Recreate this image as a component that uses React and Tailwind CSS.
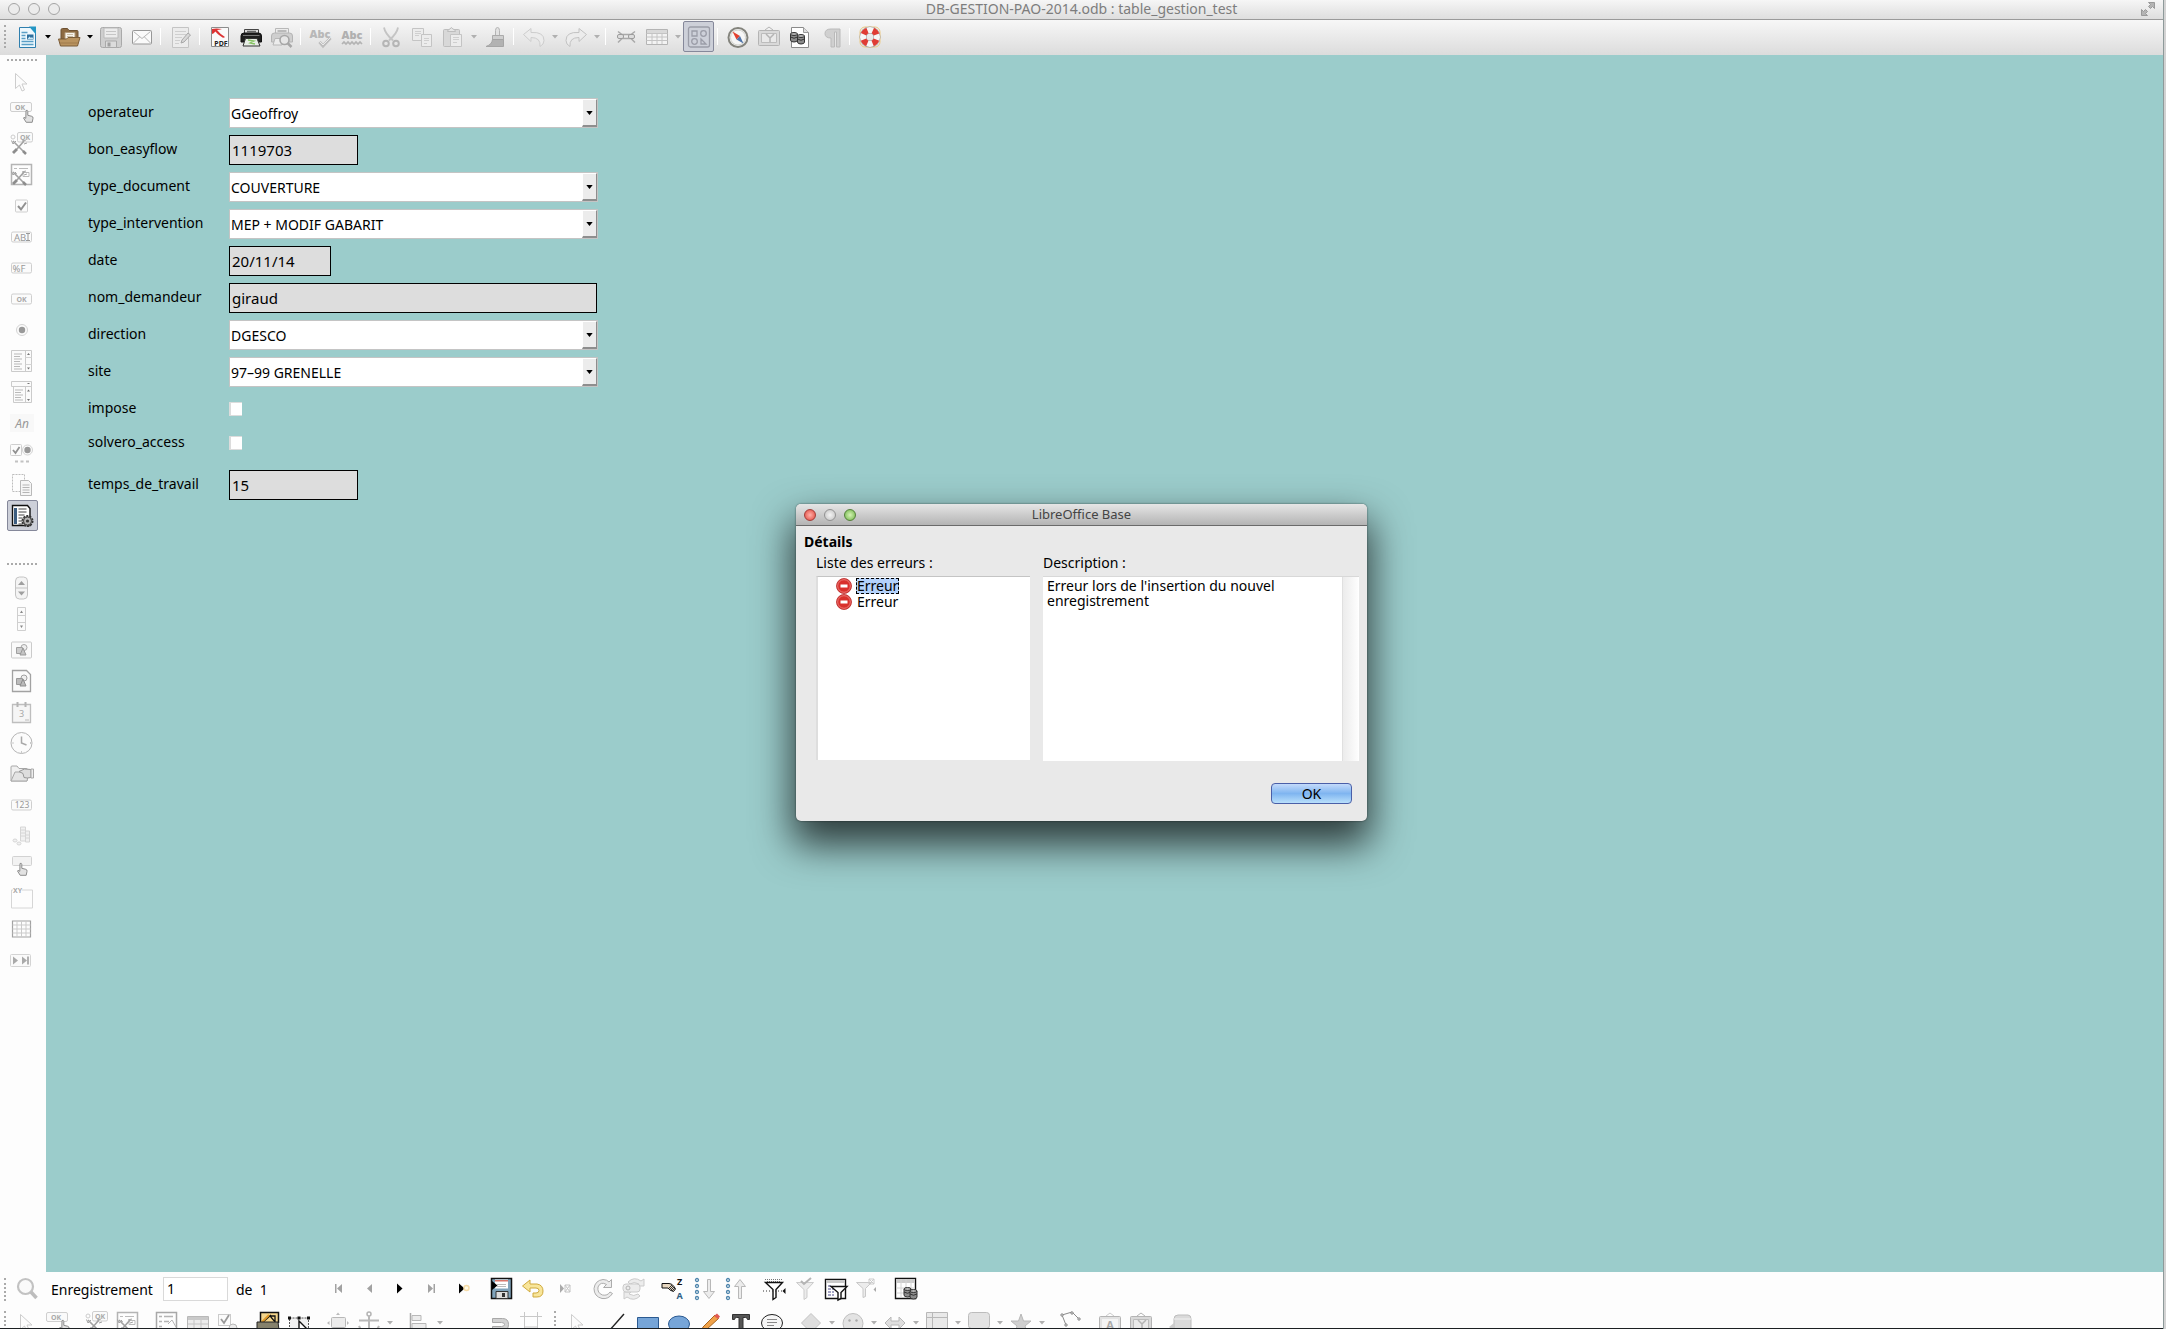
import React, { useState } from 'react';

// petit texte dessiné dans une icône (OK, PDF, Abc...)
const T = ({ x = 12, y = 16, s = 8, c = '#999', b = 400, i, children }) => (
  <text x={x} y={y} fontSize={s} fill={c} fontWeight={b} fontStyle={i ? 'italic' : 'normal'} textAnchor="middle" fontFamily="Noto Sans, sans-serif">{children}</text>
);

const g = { fill: 'none', stroke: '#b4b4b4', strokeWidth: 1 };
const f = { fill: '#ececec', stroke: '#b8b8b8', strokeWidth: 1 };
const k = { fill: '#fff', stroke: '#111', strokeWidth: 1.4 };

const main = (x, y) => (
  <path transform={`translate(${x} ${y})`} d="M3 0.500q1.500-.8 1.800.8v4l4 1q1.500.4 1.200 2l-.8 4h-6L0.500 8q0-1.500 2.300.3z" fill="#e2e2e2" stroke="#8e8e8e" />
);
const outils = (
  <>
    <path d="M3 9 15 21M14 9 7 17" stroke="#a2a2a2" strokeWidth="1.600" />
    <path d="M1.500 8.500 3 12l3-3M12 9l4-1M14 12l3-1" stroke="#a2a2a2" fill="none" />
    <path d="m6 16-4 4 2 2 4-4z" fill="#8d8d8d" />
    <path d="m13 19 3 3" stroke="#8d8d8d" strokeWidth="2.500" />
  </>
);
const entonnoir = (p) => <path d="M3.500 5.500h17l-6.500 7v8l-3 2v-10z" {...p} />;
const baril = (x, y) => (
  <g fill="#8c8c8c" stroke="#333">
    <path d={`M${x} ${y}v6q0 2 3.500 2t3.500-2v-6`} />
    <ellipse cx={x + 3.5} cy={y} rx="3.500" ry="1.500" fill="#b5b5b5" />
    <path d={`M${x} ${y + 3}q3.500 2.500 7 0`} fill="none" />
  </g>
);

const ICONS = {
  nouveau: (
    <>
      <path d="M4.500 2.500h11l5 5v15h-16z" fill="#eef8fd" stroke="#2f7fae" />
      <path d="M14 1.500h7v8z" fill="#2496c4" />
      <path d="M6.500 7.500h6M6.500 10.500h4M6.500 13.500h4M6.500 16.500h12M6.500 19.500h12" stroke="#5a9fc6" strokeWidth="1.400" />
      <path d="M12 9.500h6.500v5H12z" fill="#2d6f9d" />
      <path d="m12.500 14 2-2.500 1.500 1.500 1-1 1.500 2z" fill="#c9e8f5" />
    </>
  ),
  ouvrir: (
    <>
      <path d="M4 14V5q0-1.500 1.500-1.500h5L12 5.500h8q1 0 1 1V14z" fill="#8d6a42" stroke="#6e5233" />
      <path d="M8 7.500h10V15H8z" fill="#f7f3ec" stroke="#b09a7a" />
      <path d="M10 9.500h6M10 11.500h6" stroke="#c9bda6" />
      <path d="M1.500 14h8l1.500-1.500h12L20.500 21h-17z" fill="#b9935f" stroke="#7b5c38" />
      <path d="M3 18h18.500" stroke="#9f7b4c" />
    </>
  ),
  enregistrer: (
    <>
      <rect x="1.500" y="2.500" width="21" height="20" rx="2" fill="#cfcfcf" stroke="#a9a9a9" />
      <path d="M5 3h14v10H5z" fill="#ececec" stroke="#bbb" />
      <path d="M7 6.500h10M7 9.500h10" stroke="#c6c6c6" />
      <path d="M6.500 16h11v6.500h-11z" fill="#dcdcdc" stroke="#aaa" />
      <path d="M8.500 17.500h3v4h-3z" fill="#a0a0a0" />
    </>
  ),
  mail: (
    <>
      <rect x="2.500" y="5.500" width="19" height="13.500" rx="1" fill="#fafafa" stroke="#979797" />
      <path d="m3.500 6.500 8.500 7 8.500-7M3.500 18l6-6M20.500 18l-6-6" fill="none" stroke="#b5b5b5" />
    </>
  ),
  editer: (
    <>
      <path d="M3.500 2.500h16v20h-16z" {...f} stroke="#c4c4c4" />
      <path d="M6 6.500h11M6 9.500h11M6 12.500h7M6 15.500h5M6 18.500h4" stroke="#cfcfcf" />
      <path d="m12 18 1-3 6-7 2.500 2-6.500 7z" fill="#d8d8d8" stroke="#a8a8a8" />
    </>
  ),
  pdf: (
    <>
      <path d="M3.500 2.500h17v19h-17z" fill="#fafafa" stroke="#8c8c8c" />
      <path d="M4 4q4-1 10 0-3 1-5 1 3 4 8 7-1 1-2.500.5Q9 9 7.500 6.500 5 9 4 9z" fill="#dd3333" />
      <T x={13} y={20.5} s={7} c="#222" b={700}>PDF</T>
    </>
  ),
  imprimer: (
    <>
      <path d="M5.500 9V4.500h14V9z" fill="#ddd" stroke="#444" />
      <path d="M8 6.500h9" stroke="#666" strokeWidth="1.500" />
      <path d="M2 11q0-3 3-3h14.500q3 0 3 3v6H2z" fill="#1f1f1f" stroke="#111" />
      <path d="M4 10.500h16.500" stroke="#777" />
      <path d="M6.500 13.500h11.500l3 7.500H4z" fill="#e8eee6" stroke="#333" />
      <path d="m9 15 6 1-4 2 5 1" stroke="#87c364" fill="none" strokeWidth="1.300" />
    </>
  ),
  apercu: (
    <>
      <path d="M5.500 9V3.500h13V9z" {...f} />
      <path d="M7.500 6h9" stroke="#aaa" strokeWidth="1.500" />
      <path d="M1.500 11q0-3 3-3h15q3 0 3 3v6h-21z" fill="#cfcfcf" stroke="#b4b4b4" />
      <path d="M5 13.500h7V20H3z" {...f} />
      <circle cx="14.500" cy="15" r="4.500" fill="#e6e6e6" stroke="#a6a6a6" strokeWidth="1.600" />
      <path d="m17.500 18 4 4" stroke="#a6a6a6" strokeWidth="2.500" />
    </>
  ),
  ortho: (
    <>
      <T x={11} y={12.5} s={11} c="#b8b8b8" b={900}>Abc</T>
      <path d="m10.500 17 3.500 4 7.500-8" fill="none" stroke="#bdbdbd" strokeWidth="3" />
      <path d="m11 17 3 3 7-7" fill="none" stroke="#e9e9e9" />
    </>
  ),
  orthoAuto: (
    <>
      <T x={12} y={14} s={11} c="#b0b0b0" b={900}>Abc</T>
      <path d="m2 19 2-2 2 2 2-2 2 2 2-2 2 2 2-2 2 2 2-2 2 2" fill="none" stroke="#b3b3b3" strokeWidth="1.600" />
    </>
  ),
  couper: (
    <>
      <path d="M5 2.500q1 6 9 13M19 2.500q-1 6-9 13" fill="none" stroke="#c4c4c4" strokeWidth="1.800" />
      <circle cx="7" cy="18.500" r="2.800" fill="none" stroke="#b5b5b5" strokeWidth="2" />
      <circle cx="17" cy="18.500" r="2.800" fill="none" stroke="#b5b5b5" strokeWidth="2" />
    </>
  ),
  copier: (
    <>
      <path d="M2.500 3.500h11v12h-11z" {...f} stroke="#c4c4c4" />
      <path d="M5 6.500h6M5 8.500h6M5 10.500h4" stroke="#cfcfcf" />
      <path d="M11.500 9.500h10v12h-10z" {...f} stroke="#c4c4c4" />
      <path d="M14 13.500h5M14 15.500h5M14 18.500h3" stroke="#cfcfcf" />
    </>
  ),
  coller: (
    <>
      <rect x="2.500" y="4.500" width="16" height="17" rx="1" fill="#d8d8d8" stroke="#bdbdbd" />
      <path d="M6.500 6.500q0-2 2.500-2.500 1-3 3 0 2.500.5 2.500 2.500z" fill="#e6e6e6" stroke="#bdbdbd" />
      <path d="M9.500 9.500h11v12h-11z" {...f} stroke="#c4c4c4" />
      <path d="M12 12.500h6M12 14.500h6M12 17.500h4" stroke="#cfcfcf" />
    </>
  ),
  pinceau: (
    <>
      <path d="M14.500 2.500q2 0 2 3v5h-4v-5q0-3 2-3z" fill="#e2e2e2" stroke="#b4b4b4" />
      <path d="M9.500 10.500h11v4h-11z" fill="#cfcfcf" stroke="#ababab" />
      <path d="M9.500 14.500h11v7H3q6-2 6.500-7z" fill="#b2b2b2" stroke="#a5a5a5" />
    </>
  ),
  annuler: <path d="M1.500 9.500 9 3.500v4q13-1 13 8 0 4-4 6 1-9-9-9v4z" {...f} stroke="#cdcdcd" />,
  retablir: <path d="M22.500 9.500 15 3.500v4q-13-1-13 8 0 4 4 6-1-9 9-9v4z" {...f} stroke="#c2c2c2" />,
  lien: (
    <>
      <path d="m4 6.500 4 3h9l4-3M4 17.500l4-4h9l4 4" fill="none" stroke="#a9a9a9" strokeWidth="1.500" />
      <rect x="3.500" y="9.500" width="6" height="4" rx="1.500" fill="#ddd" stroke="#9c9c9c" />
      <rect x="14.500" y="9.500" width="6" height="4" rx="1.500" fill="#ddd" stroke="#9c9c9c" />
    </>
  ),
  tableau: (
    <>
      <path d="M1.500 4.500h21v15h-21z" fill="#f3f3f3" stroke="#b4b4b4" />
      <path d="M2 5h20v3H2z" fill="#d9d9d9" />
      <path d="M1.500 8.500h21M1.500 12h21M1.500 15.500h21M7 8v11M12 8v11M17 8v11" stroke="#c4c4c4" />
    </>
  ),
  formes: (
    <g fill="none" stroke="#9b9da8" strokeWidth="1.300">
      <rect x="1.500" y="2" width="21" height="20" rx="2" />
      <path d="M5 6h5v5H5zM14 14l5 5h-5z" />
      <circle cx="16.500" cy="8.500" r="2.800" />
      <circle cx="7.500" cy="16.500" r="2.800" />
    </g>
  ),
  boussole: (
    <>
      <circle cx="12" cy="12.500" r="9.500" fill="#f6f6f6" stroke="#83837c" strokeWidth="2" />
      <circle cx="12" cy="12.500" r="7.500" fill="none" stroke="#d2d2cc" />
      <path d="m6.500 6.500 7.500 4.500-3.500 3.500z" fill="#e3402f" />
      <path d="m17.500 18.500-7-4 3.500-3.500z" fill="#4f74a8" />
    </>
  ),
  galerie: (
    <>
      <path d="m8 5 4-3 4 3" {...g} />
      <rect x="1.500" y="5.500" width="21" height="15" rx="1" fill="#d9d9d9" stroke="#b4b4b4" />
      <path d="M4.500 8.500h15v9h-15z" fill="#e9e9e9" stroke="#bcbcbc" />
      <path d="m9 9 4 4 4-4M13 12v5" stroke="#b4b4b4" strokeWidth="1.500" fill="none" />
    </>
  ),
  source: (
    <>
      <path d="M3.500 2.500h12l5 5v15h-17z" fill="#fff" stroke="#8a8a8a" />
      <path d="M15.500 2.500v5h5" fill="#ddd" stroke="#999" />
      {baril(2.5, 9)}
      {baril(9.5, 11)}
    </>
  ),
  para: <path d="M21 4v18h-3.500V7h-2v15H12V13q-6 0-6-4.500T12 4z" fill="#d0d0d0" stroke="#bababa" />,
  aide: (
    <>
      <rect x="2" y="2" width="20" height="20" rx="5" fill="none" stroke="#edc982" />
      <circle cx="12" cy="12" r="7" fill="none" stroke="#9a9a9a" strokeWidth="7" />
      <circle cx="12" cy="12" r="7" fill="none" stroke="#f6f6f6" strokeWidth="6" />
      <circle cx="12" cy="12" r="7" fill="none" stroke="#e03c34" strokeWidth="6" strokeDasharray="5.500 5.500" strokeDashoffset="-2.700" />
    </>
  ),
  curseur: <path d="M5.500 3.500v15l4-3.500 2.500 6 2.500-1-2.500-6h5z" fill="#fcfcfc" stroke="#cdcdcd" />,
  okMain: (
    <>
      <rect x="0.500" y="1.500" width="21" height="9" rx="1.500" fill="#fafafa" stroke="#cfcfcf" />
      <T x={10} y={9} s={7} c="#aaa" b={700}>OK</T>
      {main(13, 9)}
    </>
  ),
  controle: (
    <>
      <circle cx="3" cy="5" r="2" {...g} stroke="#ccc" />
      <rect x="7.500" y="0.500" width="15" height="9.500" rx="1.500" fill="#fafafa" stroke="#cfcfcf" />
      <T x={15} y={8} s={7} c="#aaa" b={700}>OK</T>
      {outils}
    </>
  ),
  formulaire: (
    <>
      <path d="M1.500 1.500h20v20h-20z" fill="#fdfdfd" stroke="#b4b4b4" strokeWidth="1.500" />
      <path d="M4 5.500h3M9 5.500h9M4 10.500h3M13 9.500h6v4h-6z" fill="none" stroke="#bbb" />
      {outils}
    </>
  ),
  coche: (
    <>
      <rect x="5.500" y="6" width="12" height="12" rx="1" fill="#fbfbfb" stroke="#cfcfcf" />
      <path d="m8 12 3 3.500 5-7" fill="none" stroke="#909090" strokeWidth="2" />
    </>
  ),
  champTexte: (
    <>
      <rect x="1.500" y="7" width="20" height="10" rx="1.500" fill="#fbfbfb" stroke="#cfcfcf" />
      <T x={10} y={15.5} s={9.5}>AB</T>
      <path d="M16 8.500h4M18 8.500v7M16 15.500h4" stroke="#999" />
    </>
  ),
  format: (
    <>
      <rect x="1.500" y="7" width="20" height="10" rx="1.500" fill="#fbfbfb" stroke="#cfcfcf" />
      <T x={9} y={15.5} s={9.5}>%F</T>
    </>
  ),
  bouton: (
    <>
      <rect x="1.500" y="7" width="20" height="10" rx="1.500" fill="#fbfbfb" stroke="#cfcfcf" />
      <T x={11.5} y={14.5} s={7} c="#aaa" b={700}>OK</T>
    </>
  ),
  radio: (
    <>
      <circle cx="12" cy="12" r="5.500" fill="#fbfbfb" stroke="#d4d4d4" />
      <circle cx="12" cy="12" r="3.200" fill="#999" />
    </>
  ),
  liste: (
    <>
      <path d="M1.500 1.500h20v21h-20zM15.500 1.500v21" fill="#fbfbfb" stroke="#cbcbcb" />
      <path d="M4 5h8M4 7.500h6M4 10h8M4 12.500h6M4 15h8M4 17.500h6M4 20h8" stroke="#b9b9b9" />
      <path d="m17 6 1.500-2L20 6zM17 18.500l1.500 2 1.500-2z" fill="#777" />
      <path d="M15.500 8.500h6M15.500 15.500h6" stroke="#d4d4d4" />
    </>
  ),
  combo: (
    <>
      <path d="M1.500 1.500h20v5h-20zM3.500 6.500h18v16h-18zM15.500 6.500v16" fill="#fbfbfb" stroke="#cbcbcb" />
      <path d="M5 10h8M5 12.500h6M5 15h8M5 17.500h6M5 20h8" stroke="#b9b9b9" />
      <path d="m17 11.500 1.500-2 1.500 2zM17 19l1.500 2 1.500-2zM17.500 3h2v1h-2z" fill="#777" />
    </>
  ),
  etiquette: (
    <>
      <path d="M0 3h24v18H0z" fill="#f8f8f8" />
      <T x={12} y={16.5} s={12} i>An</T>
    </>
  ),
  plus: (
    <>
      <rect x="0.500" y="2.500" width="11" height="11" rx="1" fill="#fbfbfb" stroke="#cfcfcf" />
      <path d="m3 8 2.500 3 4-6" fill="none" stroke="#909090" strokeWidth="1.800" />
      <circle cx="17.500" cy="8" r="5" fill="#fbfbfb" stroke="#d4d4d4" />
      <circle cx="17.500" cy="8" r="3.200" fill="#999" />
      <path d="M5 19.500h3M10.500 19.500h3M16 19.500h3" stroke="#c2c2c2" strokeWidth="2" />
    </>
  ),
  conception: (
    <>
      <path d="M2.500 1.500h12v17h-12z" fill="none" stroke="#bdbdbd" strokeDasharray="2 1" />
      <path d="M10.500 7.500h8l3 3v12h-11z" fill="#f6f6f6" stroke="#b9b9b9" />
      <path d="M12.500 12h7M12.500 14.500h7M12.500 17h7M12.500 19.500h7" stroke="#b5b5b5" />
    </>
  ),
  autopilote: (
    <>
      <path d="M2.500 1.500h15l2.500 3v17h-17.500z" fill="#fff" stroke="#111" strokeWidth="1.400" />
      <path d="M4 4h3v16H4z" fill="#3c5d80" />
      <path d="M8.500 5h8M8.500 8h8M8.500 11h6M8.500 14h4M8.500 17h4M8.500 20h4" stroke="#444" />
      <circle cx="17.500" cy="17" r="5" fill="#999" stroke="#333" strokeWidth="2" strokeDasharray="2 1.100" />
      <circle cx="17.500" cy="17" r="4" fill="#b4b4b4" stroke="#444" />
      <circle cx="17.500" cy="17" r="1.600" fill="#333" />
    </>
  ),
  compteur: (
    <>
      <rect x="5.500" y="1" width="12" height="22" rx="4" fill="#f4f4f4" stroke="#c4c4c4" />
      <path d="M5.500 12h12" stroke="#c4c4c4" />
      <path d="m8 9 3.500-4L15 9zM8 15.500l3.500 4 3.500-4z" fill="#9f9f9f" />
    </>
  ),
  defilement: (
    <>
      <path d="M7.500 0.500h8v23h-8zM7.500 8.500h8M7.500 15.500h8" fill="#fbfbfb" stroke="#cfcfcf" />
      <path d="m10 6 1.500-2.500L13 6zM10 18.500l1.500 2.500 1.500-2.500z" fill="#888" />
    </>
  ),
  boutonImage: (
    <>
      <rect x="1.500" y="4" width="20" height="16" rx="1" fill="#fafafa" stroke="#cbcbcb" />
      <circle cx="14" cy="9.500" r="3" fill="#eee" stroke="#a8a8a8" />
      <path d="M6.500 9.500h6v6h-6z" fill="#ccc" stroke="#a0a0a0" />
      <path d="m13 10 3 7h-6z" fill="#c4c4c4" stroke="#999" />
    </>
  ),
  controleImage: (
    <>
      <path d="M2.500 1.500h14l4 4v17h-18z" fill="#fafafa" stroke="#a2a2a2" strokeWidth="1.300" />
      <circle cx="14" cy="9" r="3" fill="#eee" stroke="#a0a0a0" />
      <path d="M6.500 9.500h6v6h-6z" fill="#bbb" stroke="#999" />
      <path d="m13 10 3 7h-6z" fill="#bbb" stroke="#8d8d8d" />
    </>
  ),
  dateIcone: (
    <>
      <path d="M2.500 4.500h18v18h-18z" fill="#f5f5f5" stroke="#bebebe" strokeWidth="1.300" />
      <path d="M7.500 2v5M15.500 2v5" stroke="#b4b4b4" strokeWidth="2" />
      <T x={11.5} y={17} s={9} c="#a8a8a8">3</T>
      <path d="M15 20h4" stroke="#bbb" />
    </>
  ),
  heure: (
    <>
      <circle cx="11.500" cy="12" r="10.500" fill="#fbfbfb" stroke="#b5b5b5" />
      <path d="M11.500 5.500V12l5 2" fill="none" stroke="#a8a8a8" strokeWidth="1.500" />
      <path d="M2.500 12h1M20 12h1M11.500 20.500v1" stroke="#999" />
    </>
  ),
  fichier: (
    <>
      <path d="M1 19V5q0-1 1-1h5l2 2.500h8V19z" fill="#f0f0f0" stroke="#a8a8a8" />
      <path d="m1 19 4-9h14l-2 9z" fill="#e4e4e4" stroke="#a8a8a8" />
      <path d="M9 9.500q5-4 12-2v8q-4 1-7 0l-1-4z" fill="#ddd" stroke="#999" />
      <path d="M21 7h2.500v9H21z" fill="#eee" stroke="#aaa" />
    </>
  ),
  numerique: (
    <>
      <rect x="1.500" y="7" width="20" height="10" rx="1.500" fill="#fbfbfb" stroke="#cfcfcf" />
      <T x={12} y={15} s={8.5}>123</T>
    </>
  ),
  monnaie: (
    <g fill="#f1f1f1" stroke="#d6d6d6">
      <path d="M10.500 3h5v14h-5zM15.500 7h4v11h-4zM10.500 6h5M10.500 9h5M10.500 12h5M15.500 11h4M15.500 14h4" />
      <ellipse cx="5" cy="16.500" rx="2" ry="1.500" />
      <ellipse cx="9" cy="19.500" rx="2" ry="1.500" />
    </g>
  ),
  masque: (
    <>
      <rect x="2.500" y="1.500" width="19" height="9" rx="1" fill="#f2f2f2" stroke="#d2d2d2" />
      {main(7, 8)}
    </>
  ),
  groupe: (
    <>
      <path d="M3 4H1.500v18h21V4H12" {...g} stroke="#d6d6d6" />
      <T x={7.5} y={6.5} s={7} b={700} c="#aaa">XY</T>
    </>
  ),
  grille: (
    <>
      <path d="M2.500 4h18v16h-18z" fill="#fdfdfd" stroke="#a2a2a2" strokeWidth="1.200" />
      <path d="M2.500 8h18M2.500 12h18M2.500 16h18M7 4v16M11.500 4v16M16 4v16" stroke="#cbcbcb" />
    </>
  ),
  navigation: (
    <>
      <rect x="0.500" y="6.500" width="20" height="12" rx="1" fill="#fafafa" stroke="#d4d4d4" />
      <path d="m3 8.500 5 4-5 4zM12 8.500l5 4-5 4z" fill="#aaa" />
      <path d="M18 8.500v8" stroke="#999" strokeWidth="1.500" />
    </>
  ),
  rechercher: (
    <>
      <circle cx="10.500" cy="9.500" r="7.500" fill="#fafafa" stroke="#c2c2c2" strokeWidth="2.200" />
      <path d="m16 15 5.500 6" stroke="#bdbdbd" strokeWidth="3.500" />
    </>
  ),
  premier: <path d="M8 7h1.500v9H8zM15 7v9l-5-4.500z" fill="#a2a2a2" />,
  precedent: <path d="M14 7v9l-5-4.500z" fill="#a2a2a2" />,
  suivant: <path d="M8 6.500v10l5.500-5z" fill="#000" />,
  dernier: <path d="M8 7v9l5-4.500zM13.500 7H15v9h-1.500z" fill="#a2a2a2" />,
  nouvelEnr: (
    <>
      <path d="M8 6.500v10l5.500-5z" fill="#000" />
      <circle cx="15.500" cy="11" r="2.500" fill="#fffbe8" stroke="#f6dca8" strokeWidth="1.500" />
    </>
  ),
  sauver: (
    <>
      <path d="M1.500 1.500h20v20h-20z" fill="#7fa3bb" stroke="#111" strokeWidth="1.500" />
      <path d="M5 2.500h13v9H5z" fill="#fff" />
      <path d="M5 3h13v1.500H5z" fill="#d9776c" />
      <path d="M7 7.500h9M7 9.500h9" stroke="#bbb" />
      <path d="M6 14.500h12v7H6z" fill="#dcdcdc" stroke="#333" />
      <path d="M12 16h3v4h-3z" fill="#333" />
      <path d="M2 4v9l5.500-4.500z" fill="#000" />
    </>
  ),
  defaire: <path d="M1.500 9 9 3v4h7q6 1 6 7t-6 6h-4v-4h3q3 0 3-2.500T15 11H9v4z" fill="#f8e59a" stroke="#cfa93c" />,
  supprimer: (
    <>
      <path d="M8 7v9l4-4.500z" fill="#aaa" />
      <path d="M13 8h5v7h-5zM13 8l5 7M18 8l-5 7" {...g} stroke="#c4c4c4" />
    </>
  ),
  actualiser: <path d="M20.500 2.500v8h-8l3-3Q9.500 4 7 10q-1 6 4.500 8 5 1 7.500-3l2.500 1.500q-4 6-10.500 5-8-2-8-10 1-8 9-9 4 0 6 2.500z" {...f} stroke="#acacac" />,
  actualiserCtrl: (
    <>
      <path d="M22 2v7h-7l2-2q-5-3-9 0L6 5q6-6 13-1zM2 22v-7h7l-2 2q5 3 9 0l2 2q-6 6-13 1z" {...f} stroke="#cbcbcb" />
      <rect x="1" y="7" width="17" height="8" rx="3" {...f} stroke="#cbcbcb" />
      <circle cx="6" cy="11" r="2" {...g} />
    </>
  ),
  trier: (
    <>
      <path d="M1 6.500h7q3 0 5 3l1.500 2.500-2 2.500q-4-1-5.500-3.500H1z" fill="#e6d6bf" stroke="#111" />
      <path d="m8 10 4 4M10 8l4 4M9 9l4 4" stroke="#333" />
      <T x={18.5} y={8} s={9} b={700} c="#111">Z</T>
      <T x={18.5} y={22} s={9} b={700} c="#2f5f86">A</T>
    </>
  ),
  croissant: (
    <>
      <path d="M15.500 2.500h3v12h4l-5.500 7-5.500-7h4z" {...f} />
      <g fill="#fff" stroke="#4f86ad" strokeWidth="1.300">
        <circle cx="5" cy="3" r="1.500" /><circle cx="5" cy="9" r="1.500" /><circle cx="5" cy="15" r="1.500" /><circle cx="5" cy="21" r="1.500" />
      </g>
    </>
  ),
  decroissant: (
    <>
      <path d="M15.500 21.500h3v-12h4l-5.500-7-5.500 7h4z" {...f} />
      <g fill="#fff" stroke="#4f86ad" strokeWidth="1.300">
        <circle cx="5" cy="3" r="1.500" /><circle cx="5" cy="9" r="1.500" /><circle cx="5" cy="15" r="1.500" /><circle cx="5" cy="21" r="1.500" />
      </g>
    </>
  ),
  autofiltre: (
    <>
      <path d="M3 2.500h18M5 4.500h14" stroke="#777" strokeDasharray="1 1" />
      {entonnoir(k)}
      <path d="M1 14h22" stroke="#333" strokeDasharray="1 2" />
      <path d="m23.500 11v6l-3-3z" fill="#111" />
    </>
  ),
  appliquer: (
    <>
      {entonnoir({ ...f, stroke: '#cbcbcb' })}
      <path d="m8 4 3 3 7-6" {...g} strokeWidth="2" />
    </>
  ),
  filtreForm: (
    <>
      <path d="M1.500 2.500h20v19h-20z" {...k} />
      <path d="M2 3h19v3H2z" fill="#c9c9c9" />
      <path d="M4 9h4M4 12h6M4 15h6M4 18h6" stroke="#4b4b8a" strokeDasharray="3 1" />
      <path d="M7 9.500h16l-6 6v6l-3 1.500v-7.500z" {...k} />
    </>
  ),
  sansFiltre: (
    <>
      <path d="M1.500 5.500h15l-6 6v8l-2.500 1v-9z" {...f} stroke="#c8c8c8" />
      <path d="M14 2h5v5h-5zM14 2l5 5M19 2l-5 5" {...g} stroke="#ccc" />
      <path d="M21 10v5l-2.500-2.500z" fill="#aaa" />
    </>
  ),
  sourceTable: (
    <>
      <path d="M1.500 1.500h20v20h-20z" {...k} />
      <path d="M2 2h19v4H2z" fill="#ccc" />
      <path d="M2 11h19M2 16h19M7 2v19M12 2v19M17 2v19" stroke="#d4d4d4" />
      {baril(10, 12)}
      {baril(16, 14)}
    </>
  ),
  navForm: (
    <>
      <path d="M1.500 1.500h20v20h-20z" fill="#fdfdfd" stroke="#a8a8a8" strokeWidth="1.500" />
      <path d="M4 5.500h3M9 5.500h9M4 10.500h3M9 10.500h5M4 15.500h3" stroke="#b4b4b4" strokeWidth="1.500" />
      <path d="m13 13 4-4 4 7" {...g} />
    </>
  ),
  ajoutChamp: (
    <>
      <path d="M1.500 5.500h21v16h-21z" {...f} />
      <path d="M2 6h20v3H2z" fill="#c9c9c9" />
      <path d="M2 13h20M8 9v12M15 9v12" stroke="#c4c4c4" />
    </>
  ),
  activation: (
    <>
      <rect x="1.500" y="3.500" width="12" height="11" fill="#fbfbfb" stroke="#cbcbcb" />
      <path d="m4 8 3 4 5-8" fill="none" stroke="#999" strokeWidth="1.800" />
      <circle cx="16" cy="17" r="4" {...f} />
    </>
  ),
  modeConception: (
    <>
      <path d="M4.500 12V1.500h18V12" fill="#f4d58b" stroke="#111" strokeWidth="1.500" />
      <path d="m7 11 8-7M14 5h5v6z" fill="none" stroke="#111" strokeWidth="1.300" />
      <path d="m6 11 7-7" stroke="#e09a2a" strokeWidth="2" />
      <path d="M1 11h21l1.500 12H1z" fill="#85816c" stroke="#222" />
    </>
  ),
  selection: (
    <>
      <path d="M2.500 7h19v14h-19z" fill="#f1f1f1" stroke="#555" strokeDasharray="2 1" />
      <path d="M1 5.500h3v3H1zM10.500 5.500h3v3h-3zM20 5.500h3v3h-3z" fill="#111" />
      <path d="m12 10 8 8h-4l-4 4z" {...k} />
    </>
  ),
  position: (
    <>
      <rect x="5.500" y="6.500" width="14" height="10" rx="1" {...f} />
      <path d="m10 4 2-2.500L14 4M3.500 10 1 12l2.500 2M21 10l2 2-2 2" fill="#bbb" />
    </>
  ),
  ancre: (
    <>
      <circle cx="12" cy="3" r="2" {...g} strokeWidth="1.500" />
      <path d="M12 5v17M2 9.500h20M2 15q3 7 10 7t10-7" fill="none" stroke="#b8b8b8" strokeWidth="2" />
    </>
  ),
  aligner: (
    <>
      <path d="M3.500 2v20" stroke="#aaa" strokeWidth="1.500" />
      <path d="M5 4.500h9v5H5zM5 12.500h14v5H5z" {...f} />
    </>
  ),
  aimant: <path d="M4.500 7.500h10q6 0 6 6t-6 6h-10v-4h9q3 0 3-2t-3-2h-9z" fill="#d2d2d2" stroke="#a8a8a8" />,
  guides: <path d="M5.500 1v22M18.500 1v22M1 5.500h22M5.500 16h13" {...g} stroke="#c8c8c8" />,
  ligne: <path d="M4 20 19 3" stroke="#222" strokeWidth="1.400" />,
  rectangle: <path d="M1.500 6.500h21v16h-21z" fill="#76a5d8" stroke="#2b5a91" />,
  ellipse: <ellipse cx="12" cy="13" rx="10.500" ry="8" fill="#76a5d8" stroke="#2b5a91" />,
  crayon: (
    <>
      <path d="m3 21 2-5L17 4l3.500 3.500L8 19z" fill="#f0a24a" stroke="#a86620" />
      <path d="m16 5 3-2.500 3 3L20 8z" fill="#e05a55" />
    </>
  ),
  texte: <path d="M3.500 3.500h17v5h-2q0-2-2-2h-2.500v16h-4v-16H7.500q-2 0-2 2h-2z" fill="#555" stroke="#333" />,
  legende: (
    <>
      <ellipse cx="12" cy="12" rx="10.500" ry="8.500" fill="#f6f6f6" stroke="#222" />
      <path d="M7 8.500h10M7 11.500h10M7 14.500h7" stroke="#888" />
    </>
  ),
  losange: <path d="m12 2.500 9.500 9.500-9.500 9.500L2.500 12z" fill="#dedede" stroke="#c4c4c4" />,
  smiley: (
    <>
      <circle cx="12" cy="12.500" r="10" fill="#e3e3e3" stroke="#c0c0c0" />
      <circle cx="8.500" cy="9.500" r="1.200" fill="#aaa" />
      <circle cx="15.500" cy="9.500" r="1.200" fill="#aaa" />
    </>
  ),
  fleche: <path d="m2 12 6-6v4h8V6l6 6-6 6v-4H8v4z" fill="#dedede" stroke="#b8b8b8" />,
  organigramme: (
    <>
      <path d="M1.500 1.500h21v20h-21z" fill="#e9e9e9" stroke="#b8b8b8" />
      <path d="M1.500 6.500h21M7.500 1.500v20" stroke="#b8b8b8" />
    </>
  ),
  bulle: <rect x="1.500" y="1.500" width="21" height="16" rx="3" fill="#e3e3e3" stroke="#bcbcbc" />,
  etoile: <path d="m12 3 2.500 7H22l-6 5 2 7-6-4-6 4 2-7-6-5h7.500z" fill="#cfcfcf" stroke="#b8b8b8" />,
  points: (
    <g fill="#fff" stroke="#8a8a8a">
      <path d="m3 4 10-3 7 7M3 4l4 10" fill="none" />
      <path d="M2 3h2v2H2zM12 1h2v2h-2zM19 7h2v2h-2zM6 13h2v2H6z" />
    </g>
  ),
  fontwork: (
    <>
      <path d="m8 5 4-3 4 3" {...g} stroke="#ccc" />
      <rect x="1.500" y="5.500" width="21" height="16" rx="1" fill="#e2e2e2" stroke="#b4b4b4" />
      <path d="M4 8h16v13H4z" fill="#f4f4f4" />
      <T x={12} y={18} s={11} b={700} c="#aaa">A</T>
    </>
  ),
  extrusion: (
    <>
      <path d="M6 8q0-4 4-4h10q3 0 3 4v12H6z" fill="#dadada" stroke="#bdbdbd" />
      <path d="M6 8h17" stroke="#f2f2f2" />
      <path d="m1 16 5-4v8z" fill="#ccc" />
    </>
  ),
};

const Outil = ({ icone, actif }) => (
  <button
    type="button"
    aria-label={icone}
    className={actif
      ? 'w-[31px] h-[31px] shrink-0 flex items-center justify-center bg-[#cdd0d9] border border-[#85889a] rounded-xs'
      : 'w-[31px] h-[31px] shrink-0 flex items-center justify-center'}
  >
    <svg viewBox="0 0 24 24" className="w-6 h-6 overflow-visible">{ICONS[icone]}</svg>
  </button>
);

const Fleche = ({ noir }) => (
  <span className="w-[11px] shrink-0 flex justify-center">
    <svg viewBox="0 0 6 4" className="w-[6px] h-[4px]"><path d="M0 0h6L3 3.500z" fill={noir ? '#000' : '#b0b0b0'} /></svg>
  </span>
);

// '|' = séparateur, 'v' = flèche grise, 'V' = flèche noire, '' = place vide
const Barre = ({ items, sep }) => items.map((it, i) => {
  if (it === '|') return <span key={i} className={sep ? 'w-px h-[17px] mr-[4px] ml-[3px] shrink-0 bg-white' : 'w-2 shrink-0'} />;
  if (it === 'v' || it === 'V') return <Fleche key={i} noir={it === 'V'} />;
  if (it === '') return <span key={i} className="w-[31px] shrink-0" />;
  return <Outil key={i} icone={it} actif={it === 'formes' || it === 'autopilote'} />;
});

const HAUT = ['nouveau', 'V', 'ouvrir', 'V', 'enregistrer', 'mail', '|', 'editer', '|', 'pdf', 'imprimer', 'apercu', '|', 'ortho', 'orthoAuto', '|',
  'couper', 'copier', 'coller', 'v', 'pinceau', '|', 'annuler', 'v', 'retablir', 'v', '|', 'lien', 'tableau', 'v', 'formes', '|',
  'boussole', 'galerie', 'source', 'para', '|', 'aide'];
const COTE1 = ['curseur', 'okMain', 'controle', 'formulaire', 'coche', 'champTexte', 'format', 'bouton', 'radio', 'liste', 'combo', 'etiquette', 'plus', 'conception', 'autopilote'];
const COTE2 = ['compteur', 'defilement', 'boutonImage', 'controleImage', 'dateIcone', 'heure', 'fichier', 'numerique', 'monnaie', 'masque', 'groupe', 'grille', 'navigation'];
const NAV = ['premier', 'precedent', 'suivant', 'dernier', 'nouvelEnr', '|', 'sauver', 'defaire', 'supprimer', '|', 'actualiser', 'actualiserCtrl', '|',
  'trier', 'croissant', 'decroissant', '|', 'autofiltre', 'appliquer', 'filtreForm', 'sansFiltre', '|', 'sourceTable'];
const BAS1 = ['curseur', 'okMain', '|', 'controle', 'formulaire', '|', 'navForm', 'ajoutChamp', 'activation', '|', 'modeConception', 'selection', '|',
  'position', 'ancre', 'v', '|', 'aligner', 'v', '|', '', 'aimant', 'guides'];
const BAS2 = ['curseur', '|', 'ligne', 'rectangle', 'ellipse', 'crayon', 'texte', 'legende', '|', 'losange', 'v', 'smiley', 'v', 'fleche', 'v',
  'organigramme', 'v', 'bulle', 'v', 'etoile', 'v', '|', 'points', '|', 'fontwork', 'galerie', '|', 'extrusion'];

const CHAMPS = [
  { nom: 'operateur', type: 'liste', valeur: 'GGeoffroy' },
  { nom: 'bon_easyflow', type: 'texte', valeur: '1119703', largeur: 'w-[129px]' },
  { nom: 'type_document', type: 'liste', valeur: 'COUVERTURE' },
  { nom: 'type_intervention', type: 'liste', valeur: 'MEP + MODIF GABARIT' },
  { nom: 'date', type: 'texte', valeur: '20/11/14', largeur: 'w-[102px]' },
  { nom: 'nom_demandeur', type: 'texte', valeur: 'giraud', largeur: 'w-[368px]' },
  { nom: 'direction', type: 'liste', valeur: 'DGESCO' },
  { nom: 'site', type: 'liste', valeur: '97–99 GRENELLE' },
];

const ChampTexte = ({ nom, valeur, largeur }) => (
  <input id={nom} type="text" defaultValue={valeur} className={`${largeur} h-[30px] px-[2px] pb-px bg-[#dddddd] border border-black outline-none text-[15px]`} />
);

const ChampListe = ({ nom, valeur }) => (
  <div className="relative w-[369px] h-[30px]">
    <select id={nom} defaultValue={valeur} className="appearance-none w-full h-full pl-px bg-white border border-[#c4c4c4] outline-none">
      <option>{valeur}</option>
    </select>
    <span className="absolute right-px top-px bottom-px w-[15px] flex items-center justify-center bg-[#ececec] border-t border-l border-white border-b-2 border-b-[#8e8e8e] border-r border-r-[#8e8e8e] pointer-events-none">
      <svg viewBox="0 0 8 5" className="w-[7px] h-[4px]"><path d="M0 0h8L4 5z" /></svg>
    </span>
  </div>
);

const Ligne = ({ nom, children, className = '' }) => (
  <div className={`flex items-center ${className}`}>
    <label htmlFor={nom} className="w-[141px] shrink-0 pb-[3px]">{nom}</label>
    {children}
  </div>
);

const Pastille = ({ className }) => <span className={`w-3 h-3 rounded-full border ${className}`} />;

const Erreur = ({ choisi }) => (
  <li className="flex items-center h-4 pl-[18px] gap-1">
    <svg viewBox="0 0 16 16" className="w-4 h-4">
      <circle cx="8" cy="8" r="7.500" fill="#d9302c" stroke="#b92b2b" strokeWidth="0.800" />
      <circle cx="8" cy="8" r="6.300" fill="none" stroke="#ef8a86" strokeWidth="0.800" />
      <path d="M4.500 6.500h7v3h-7z" fill="#fff" />
    </svg>
    <span className={choisi ? 'leading-4 bg-[#b4d2fb] outline-1 outline-dashed outline-black -outline-offset-1 px-px' : 'leading-4 px-px'}>Erreur</span>
  </li>
);

const Dialogue = ({ fermer }) => (
  <div className="absolute inset-0 pb-1 flex items-center justify-center">
    <div role="dialog" aria-labelledby="titre-dialogue" className="w-[571px] rounded-[5px] overflow-hidden bg-[#e9e9e9] shadow-[0_20px_38px_4px_rgba(0,0,0,0.7),0_0_2px_rgba(0,0,0,0.6)]">
      <div className="h-[22px] px-2 grid grid-cols-[1fr_auto_1fr] items-center bg-linear-to-b from-[#e6e6e6] to-[#b4b4b4] border-b border-[#6a6a6a]">
        <div className="flex gap-2">
          <Pastille className="bg-radial from-[#ffb0aa] to-[#dd3f3a] border-[#a33d39]" />
          <Pastille className="bg-radial from-[#f4f4f4] to-[#c2c2c2] border-[#929292]" />
          <Pastille className="bg-radial from-[#d5f3b4] to-[#6fb445] border-[#54803a]" />
        </div>
        <h2 id="titre-dialogue" className="text-[13px] text-[#444]">LibreOffice Base</h2>
      </div>
      <div className="pl-2 pr-2 pt-[5px]">
        <h3 className="font-bold leading-[21px]">Détails</h3>
        <div className="pl-3 flex gap-[13px]">
          <div className="w-[214px]">
            <p id="liste-erreurs" className="leading-[21px] mb-[3px]">Liste des erreurs :</p>
            <ul aria-labelledby="liste-erreurs" className="h-[184px] pt-px bg-white border-t border-t-[#c4c4c4] border-l-2 border-l-[#dedede]">
              <Erreur choisi />
              <Erreur />
            </ul>
          </div>
          <div className="flex-1">
            <label htmlFor="description" className="block leading-[21px] mb-[3px]">Description :</label>
            <div className="flex h-[185px] bg-white border-t border-[#d8d8d8]">
              <textarea id="description" readOnly className="flex-1 min-w-0 resize-none outline-none pl-1 pt-px leading-[15px]" defaultValue="Erreur lors de l'insertion du nouvel enregistrement" />
              <span className="w-4 mr-px bg-linear-to-r from-[#ececec] to-[#fdfdfd] border-l border-[#e0e0e0]" />
            </div>
          </div>
        </div>
        <div className="flex justify-end pt-[22px] pb-[17px] pr-[7px]">
          <button type="button" onClick={fermer} className="w-[81px] h-[21px] leading-[18px] rounded-[4px] border border-[#4a5fa8] bg-linear-to-b from-[#c3dafa] via-[#7fb5f0] to-[#b9e0fb]">OK</button>
        </div>
      </div>
    </div>
  </div>
);

const App = () => {
  const [erreur, setErreur] = useState(true);

  return (
    <div className="relative min-h-screen flex bg-[#b4b4b4] text-[14px] text-black font-['Noto_Sans','Open_Sans',sans-serif]">
      <div className="relative flex-1 min-w-0 flex flex-col bg-[#fdfdfd]">

        {/* BARRE DE TITRE */}
        <header className="h-5 px-2 pb-[2px] grid grid-cols-[1fr_auto_1fr] items-center bg-linear-to-b from-[#f6f6f6] to-[#dedede] border-b border-[#9a9a9a]">
          <div className="flex gap-2">
            <Pastille className="border-[#a4a4a4] bg-[#ececec]" />
            <Pastille className="border-[#a4a4a4] bg-[#ececec]" />
            <Pastille className="border-[#a4a4a4] bg-[#ececec]" />
          </div>
          <h1 className="leading-4 text-[#7d7d7d]">DB-GESTION-PAO-2014.odb : table_gestion_test</h1>
          <svg viewBox="0 0 14 14" className="w-[14px] h-[14px] justify-self-end" fill="#b4b4b4" stroke="#999">
            <path d="M7.500 0.500h6v6l-2-2-2 2-2-2 2-2zM6.500 13.500h-6v-6l2 2 2-2 2 2-2 2z" />
          </svg>
        </header>

        {/* BARRE D'OUTILS STANDARD */}
        <div className="h-[35px] pl-1 pb-[2px] flex items-center bg-linear-to-b from-[#f7f7f7] to-[#dcdcdc] overflow-hidden">
          <span className="h-[23px] mr-[5px] border-l-2 border-dotted border-[#aaa]" />
          <Barre items={HAUT} sep />
        </div>

        <div className="flex-1 flex">
          {/* COLONNE DES CONTRÔLES DE FORMULAIRE */}
          <aside className="w-[46px] shrink-0 pt-1 pr-[2px] flex flex-col items-center">
            <span className="w-[30px] mb-[5px] border-t-2 border-dotted border-[#aaa]" />
            <Barre items={COTE1} />
            <span className="w-[30px] mt-8 mb-[7px] border-t-2 border-dotted border-[#aaa]" />
            <Barre items={COTE2} />
          </aside>

          {/* FORMULAIRE */}
          <main className="flex-1 bg-[#9bcccb] pt-[43px] pl-[42px]">
            <form className="flex flex-col gap-[7px]" onSubmit={(e) => e.preventDefault()}>
              {CHAMPS.map(c => (
                <Ligne key={c.nom} nom={c.nom}>
                  {c.type === 'liste' ? <ChampListe {...c} /> : <ChampTexte {...c} />}
                </Ligne>
              ))}
              <div className="-mt-[2px]">
                {['impose', 'solvero_access'].map(nom => (
                  <Ligne key={nom} nom={nom} className="h-[34px]">
                    <input id={nom} type="checkbox" className="appearance-none w-[13px] h-[14px] bg-white border-t border-l-2 border-b border-[#dcdcdc] checked:bg-gray-600" />
                  </Ligne>
                ))}
              </div>
              <Ligne nom="temps_de_travail" className="mt-[3px]">
                <ChampTexte nom="temps_de_travail" valeur="15" largeur="w-[129px]" />
              </Ligne>
            </form>
          </main>
        </div>

        {/* NAVIGATION DANS LES ENREGISTREMENTS */}
        <div className="h-[35px] pl-1 pb-px flex items-center overflow-hidden">
          <span className="h-[23px] mr-[5px] border-l-2 border-dotted border-[#aaa]" />
          <Outil icone="rechercher" />
          <label htmlFor="enr" className="w-[113px] pl-[9px] shrink-0">Enregistrement</label>
          <input id="enr" type="text" defaultValue="1" className="ml-2 w-[65px] h-6 px-[3px] pb-px bg-white border border-[#d9d9d9] outline-none" />
          <span className="w-[95px] pl-2 shrink-0 whitespace-pre">de  1</span>
          <Barre items={NAV} />
        </div>

        {/* BARRE DE DESSIN, coupée par le bas de l'écran */}
        <div className="h-[22px] pl-1 flex items-start border-b border-[#1b1f22] overflow-hidden">
          <span className="h-[23px] mt-1 mr-[5px] border-l-2 border-dotted border-[#aaa]" />
          <div className="flex items-center">
            <Barre items={BAS1} />
          </div>
          <span className="h-[23px] mt-1 ml-2 mr-[6px] border-l-2 border-dotted border-[#aaa]" />
          <div className="flex items-center">
            <Barre items={BAS2} />
          </div>
        </div>

        {erreur && <Dialogue fermer={() => setErreur(false)} />}
      </div>
      {/* bord de la fenêtre située derrière */}
      <div className="w-[3px] shrink-0 bg-linear-to-b from-[#d4d4d4] via-[#c4c4c4] to-[#d4d4d4] border-l border-[#8e9a9a]" />
    </div>
  );
};

export default App;
